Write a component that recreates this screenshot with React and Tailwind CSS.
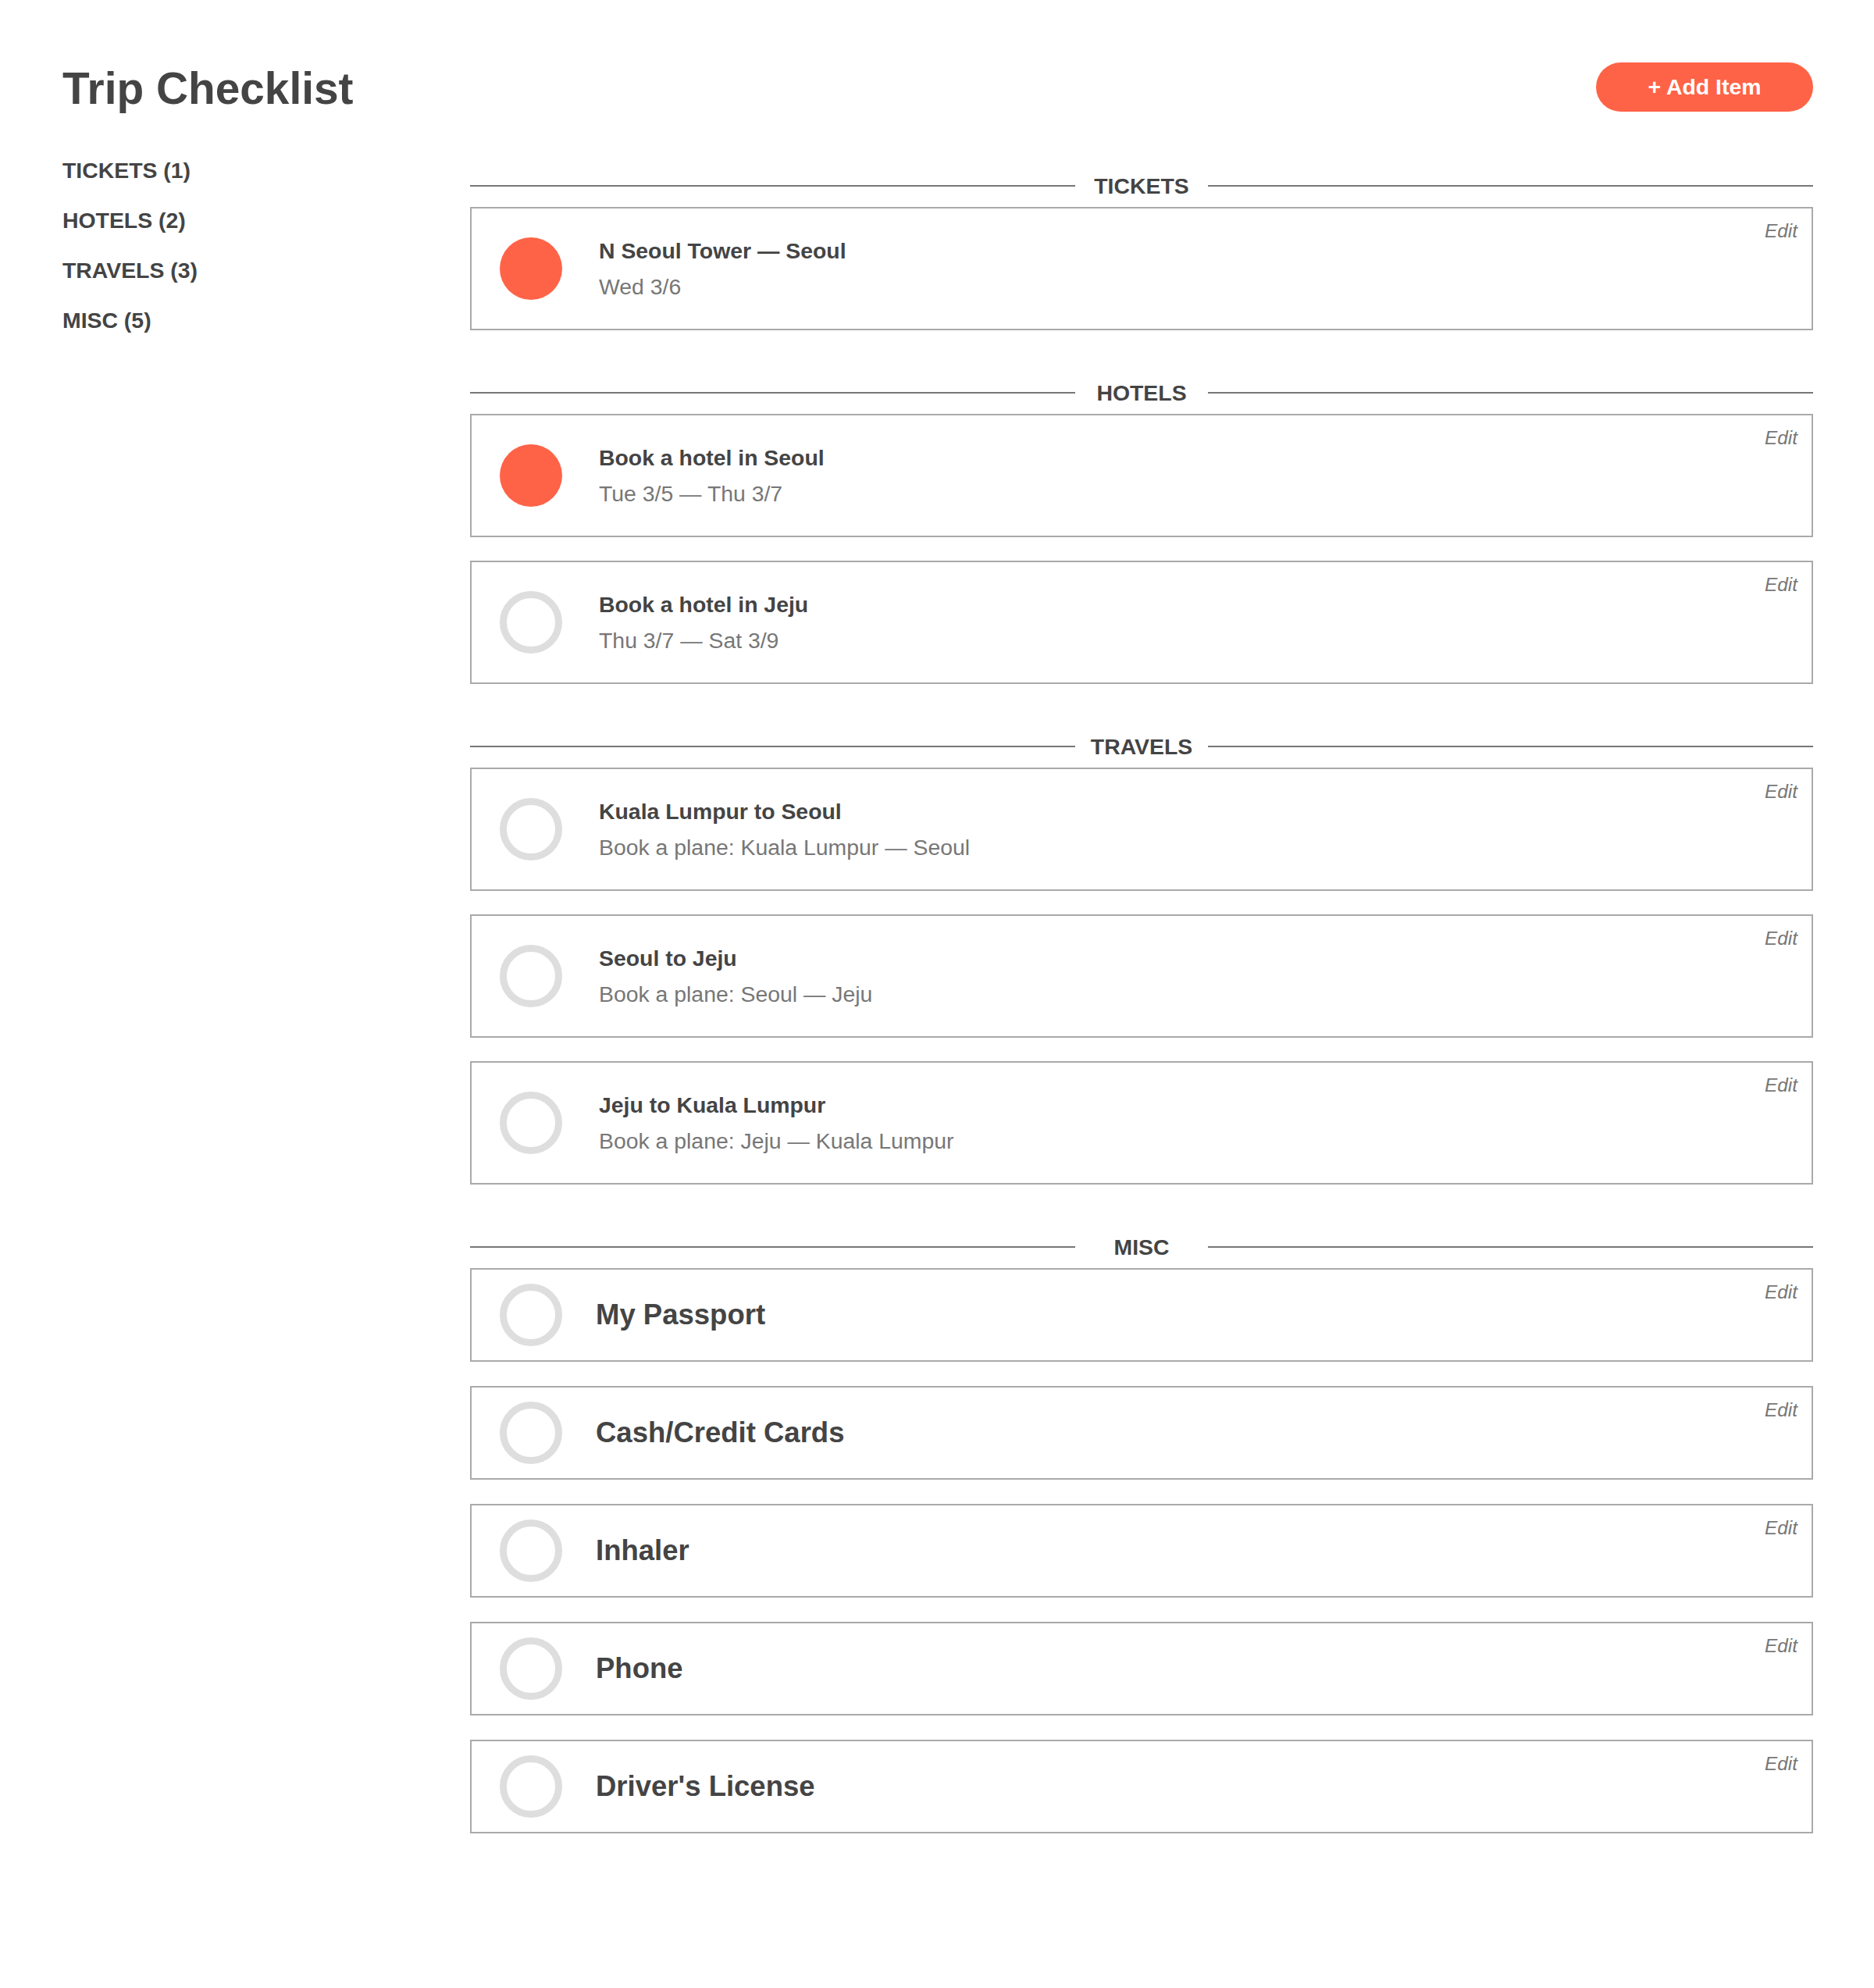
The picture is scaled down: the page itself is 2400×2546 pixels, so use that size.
import React from "react";

const sections = [
  {
    name: "TICKETS",
    items: [{ title: "N Seoul Tower — Seoul", sub: "Wed 3/6", done: true }],
  },
  {
    name: "HOTELS",
    items: [
      { title: "Book a hotel in Seoul", sub: "Tue 3/5 — Thu 3/7", done: true },
      { title: "Book a hotel in Jeju", sub: "Thu 3/7 — Sat 3/9", done: false },
    ],
  },
  {
    name: "TRAVELS",
    items: [
      { title: "Kuala Lumpur to Seoul", sub: "Book a plane: Kuala Lumpur — Seoul", done: false },
      { title: "Seoul to Jeju", sub: "Book a plane: Seoul — Jeju", done: false },
      { title: "Jeju to Kuala Lumpur", sub: "Book a plane: Jeju — Kuala Lumpur", done: false },
    ],
  },
  {
    name: "MISC",
    items: [
      { title: "My Passport" },
      { title: "Cash/Credit Cards" },
      { title: "Inhaler" },
      { title: "Phone" },
      { title: "Driver's License" },
    ],
  },
];

const Check = ({ done }) =>
  done ? (
    <div className="w-[80px] h-[80px] shrink-0 rounded-full bg-[#ff6347]" />
  ) : (
    <div className="w-[80px] h-[80px] shrink-0 rounded-full border-[9px] border-[#dedede]" />
  );

const Edit = () => (
  <span className="absolute top-[17px] right-[18px] text-[24.4px] italic leading-none text-[#777]">
    Edit
  </span>
);

const Divider = ({ label }) => (
  <div className="flex items-center h-[28px]">
    <div className="flex-1 h-[2px] bg-[#777]" />
    <div className="w-[170px] text-center text-[28.4px] font-bold leading-none">{label}</div>
    <div className="flex-1 h-[2px] bg-[#777]" />
  </div>
);

const App = () => {
  return (
    <div className="min-h-screen bg-white text-[#444] font-['Liberation_Sans',Arial,sans-serif]">
      <div className="pl-[80px] pr-[78px] pt-[80px] pb-[200px]">
        {/* Header */}
        <div className="flex items-start justify-between">
          <h1 className="mt-[6px] text-[56.8px] font-bold leading-none">Trip Checklist</h1>
          <button className="h-[63px] w-[278px] rounded-full bg-[#ff6347] text-white text-[28.4px] font-bold leading-none">
            + Add Item
          </button>
        </div>

        <div className="flex">
          {/* Sidebar */}
          <div className="w-[522px] shrink-0 pt-[61px] flex flex-col gap-[35.6px]">
            {sections.map((s) => (
              <div key={s.name} className="text-[28.4px] font-bold leading-none">
                {s.name} ({s.items.length})
              </div>
            ))}
          </div>

          {/* List */}
          <div className="flex-1 pt-[81px] flex flex-col gap-[66px]">
            {sections.map((s) => (
              <div key={s.name}>
                <Divider label={s.name} />
                {s.name !== "MISC" ? (
                  <div className="mt-[13px] flex flex-col gap-[30px]">
                    {s.items.map((it) => (
                      <div
                        key={it.title}
                        className="relative h-[158px] flex items-center border-2 border-[#aaa] pl-[36px]"
                      >
                        <Check done={it.done} />
                        <div className="ml-[47px]">
                          <div className="text-[28.4px] font-bold leading-none">{it.title}</div>
                          <div className="mt-[18px] text-[28.4px] leading-none text-[#777]">{it.sub}</div>
                        </div>
                        <Edit />
                      </div>
                    ))}
                  </div>
                ) : (
                  <div className="mt-[13px] flex flex-col gap-[31px]">
                    {s.items.map((it) => (
                      <div
                        key={it.title}
                        className="relative h-[120px] flex items-center border-2 border-[#aaa] pl-[36px]"
                      >
                        <Check done={false} />
                        <div className="ml-[43px] text-[36.5px] font-bold leading-none">{it.title}</div>
                        <Edit />
                      </div>
                    ))}
                  </div>
                )}
              </div>
            ))}
          </div>
        </div>
      </div>
    </div>
  );
};

export default App;
